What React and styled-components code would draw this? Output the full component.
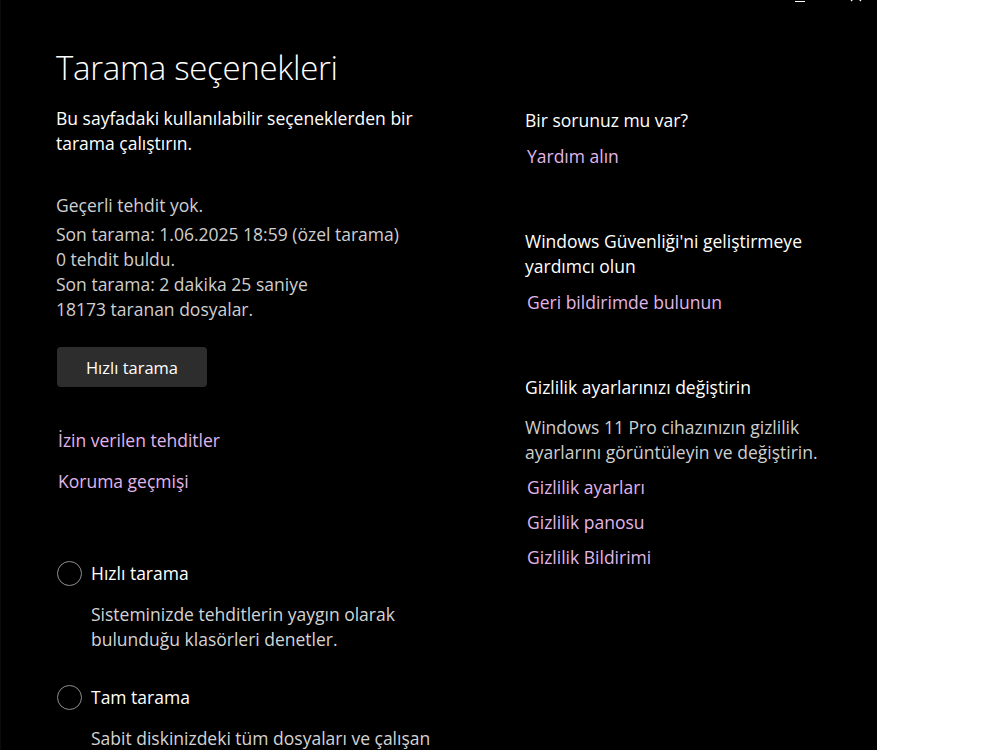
import React from 'react';
import styled, {createGlobalStyle} from 'styled-components';

const Global = createGlobalStyle`
  html, body {
    margin: 0;
    padding: 0;
    background: #ffffff;
  }
  body {
    font-family: "Open Sans", "Noto Sans", sans-serif;
    -webkit-font-smoothing: antialiased;
  }
`;

const Window = styled.div`
  width: 877px;
  height: 750px;
  background: #000000;
  overflow: hidden;
  box-sizing: border-box;
  padding: 0 0 0 55px;
  border-left: 1px solid #0b0b0b;
`;

// caption buttons sit mostly above the visible area, only their feet show
const Caption = styled.div`
  display: flex;
  justify-content: flex-end;
  align-items: flex-end;
  gap: 45px;
  height: 2px;
  overflow: hidden;
  padding-right: 15px;
  margin-bottom: 43px;
`;

const Minimize = styled.span`
  width: 10px;
  height: 1px;
  background: #ffffff;
`;

const Title = styled.h1`
  margin: 0 0 15px;
  font-size: 33px;
  font-weight: 300;
  color: #ffffff;
  letter-spacing: -0.3px;
  line-height: 46px;
`;

const Columns = styled.div`
  display: grid;
  grid-template-columns: 469px 1fr;
`;

const Column = styled.div`
  display: flex;
  flex-direction: column;
  align-items: flex-start;
  padding-top: ${p => p.$offset || 0}px;
`;

const Text = styled.p`
  margin: ${p => p.$mt || 0}px 0 0;
  font-size: 17.5px;
  line-height: 25px;
  color: ${p => (p.$muted ? '#cfcfcf' : '#ffffff')};
`;

const Heading = styled.h2`
  margin: ${p => p.$mt || 0}px 0 0;
  font-size: 17.5px;
  line-height: 25px;
  font-weight: 400;
  color: #ffffff;
`;

const Link = styled.a`
  display: block;
  margin: ${p => p.$mt || 0}px 0 0 2px;
  font-size: 17.5px;
  line-height: 25px;
  color: #e0b6e9;
  text-decoration: none;
  cursor: pointer;
`;

const Button = styled.button`
  margin-top: 25px;
  margin-left: 1px;
  width: 150px;
  height: 40px;
  border: none;
  border-radius: 4px;
  background: #2d2d2d;
  color: #ffffff;
  font-family: inherit;
  font-size: 16.5px;
  cursor: pointer;
`;

const Option = styled.label`
  display: flex;
  align-items: center;
  gap: 9px;
  margin-top: ${p => p.$mt || 0}px;
  font-size: 17.5px;
  line-height: 25px;
  color: #ffffff;
  cursor: pointer;
`;

const Radio = styled.span`
  width: 25px;
  height: 25px;
  margin-left: 1px;
  border: 1.5px solid #8f8f8f;
  border-radius: 50%;
  box-sizing: border-box;
  flex: none;
`;

const OptionDesc = styled(Text)`
  padding-left: 35px;
  color: #d4d4d4;
`;

export default function App() {
  return (
    <>
      <Global />
      <Window>
        <Caption>
          <Minimize />
          <svg width="12" height="12" viewBox="0 0 12 12">
            <path d="M1 1 L11 11 M11 1 L1 11" stroke="#ffffff" strokeWidth="1.2" fill="none" />
          </svg>
        </Caption>
        <Title>Tarama seçenekleri</Title>
        <Columns>
          <Column>
            <Text>
              Bu sayfadaki kullanılabilir seçeneklerden bir<br />
              tarama çalıştırın.
            </Text>
            <Text $muted $mt={37}>Geçerli tehdit yok.</Text>
            <Text $muted $mt={4}>Son tarama: 1.06.2025 18:59 (özel tarama)</Text>
            <Text $muted>0 tehdit buldu.</Text>
            <Text $muted>Son tarama: 2 dakika 25 saniye</Text>
            <Text $muted>18173 taranan dosyalar.</Text>
            <Button>Hızlı tarama</Button>
            <Link $mt={41}>İzin verilen tehditler</Link>
            <Link $mt={16}>Koruma geçmişi</Link>
            <Option $mt={67}>
              <Radio />
              Hızlı tarama
            </Option>
            <OptionDesc $mt={16}>
              Sisteminizde tehditlerin yaygın olarak<br />
              bulunduğu klasörleri denetler.
            </OptionDesc>
            <Option $mt={33}>
              <Radio />
              Tam tarama
            </Option>
            <OptionDesc $mt={16}>
              Sabit diskinizdeki tüm dosyaları ve çalışan<br />
              programları denetler.
            </OptionDesc>
          </Column>
          <Column $offset={2}>
            <Heading>Bir sorunuz mu var?</Heading>
            <Link $mt={11}>Yardım alın</Link>
            <Heading $mt={60}>
              Windows Güvenliği'ni geliştirmeye<br />yardımcı olun
            </Heading>
            <Link $mt={11}>Geri bildirimde bulunun</Link>
            <Heading $mt={60}>Gizlilik ayarlarınızı değiştirin</Heading>
            <Text $muted $mt={15}>
              Windows 11 Pro cihazınızın gizlilik<br />
              ayarlarını görüntüleyin ve değiştirin.
            </Text>
            <Link $mt={10}>Gizlilik ayarları</Link>
            <Link $mt={10}>Gizlilik panosu</Link>
            <Link $mt={10}>Gizlilik Bildirimi</Link>
          </Column>
        </Columns>
      </Window>
    </>
  );
}
